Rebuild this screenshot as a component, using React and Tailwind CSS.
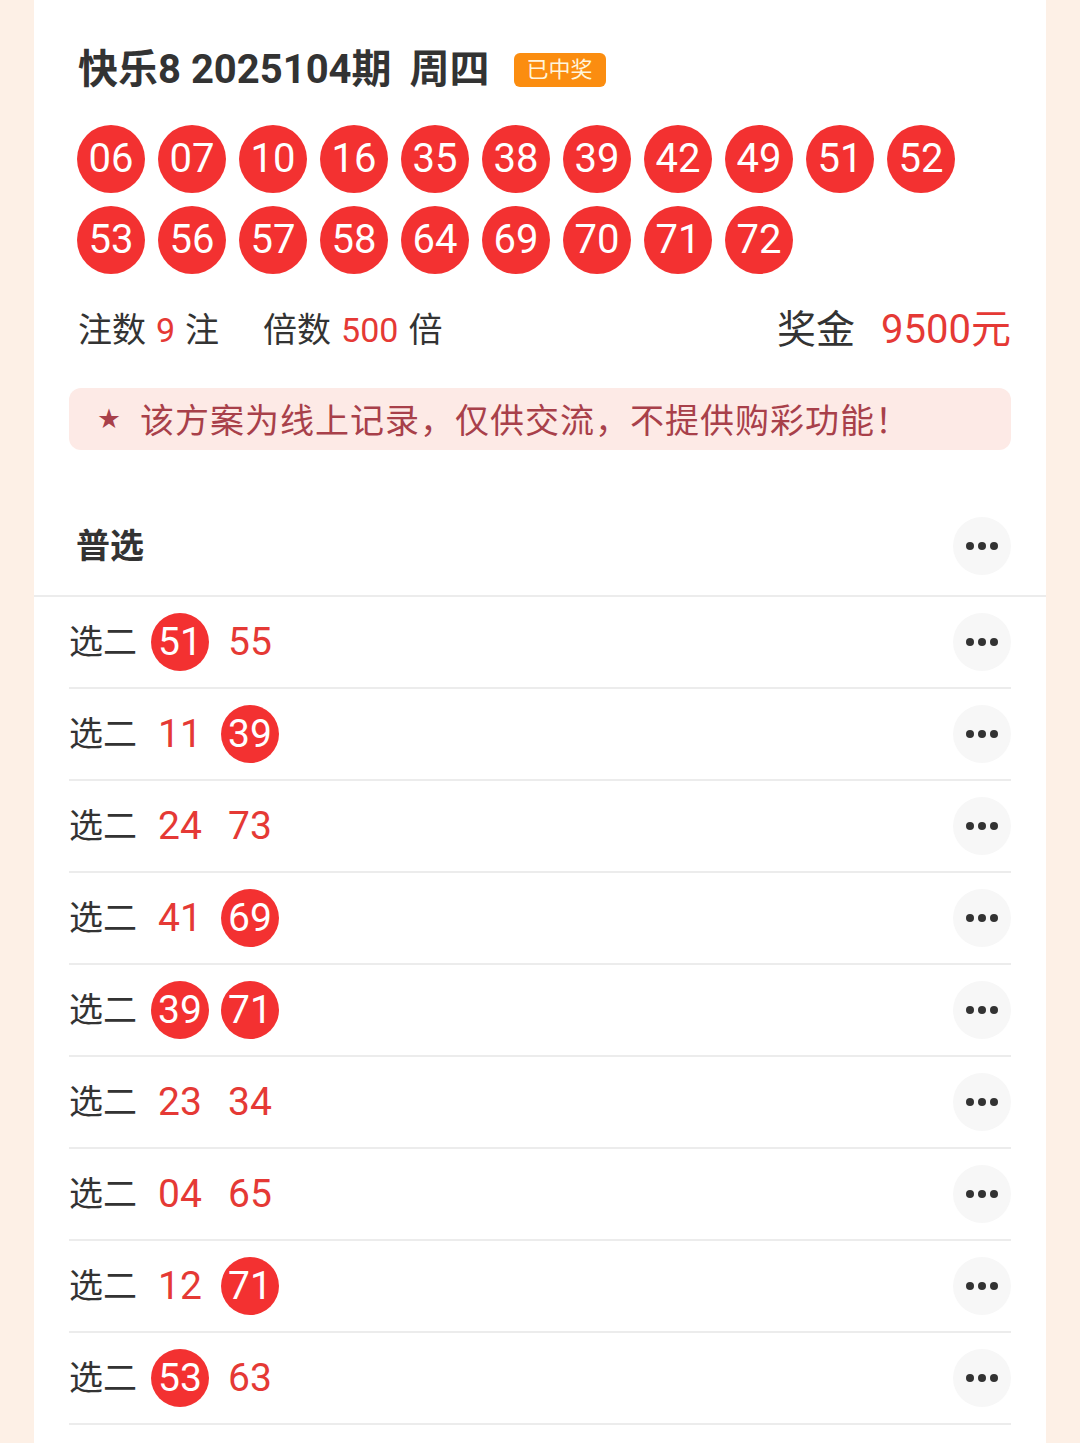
const DRAW = ['06','07','10','16','35','38','39','42','49','51','52','53','56','57','58','64','69','70','71','72']

const PICKS = [
  [['51', true], ['55', false]],
  [['11', false], ['39', true]],
  [['24', false], ['73', false]],
  [['41', false], ['69', true]],
  [['39', true], ['71', true]],
  [['23', false], ['34', false]],
  [['04', false], ['65', false]],
  [['12', false], ['71', true]],
  [['53', true], ['63', false]],
]

const FONT = { fontFamily: 'Roboto, "Noto Sans CJK SC", sans-serif' }

export default function App() {
  return (
    <div style={FONT} className="w-[1080px] h-[1443px] bg-[#fdf0e6] px-[34px] overflow-hidden">
      <div className="bg-white h-full">
        {/* Header */}
        <div className="px-[35px] pt-[48px]">
          <div className="h-[44px] pl-[9px] flex items-center">
            <span className="text-[40px] font-bold text-[#333] leading-none">快乐8 2025104期</span>
            <span className="text-[40px] font-bold text-[#333] leading-none ml-[18px]">周四</span>
            <span className="ml-[24px] h-[34px] px-[13px] rounded-[6px] bg-[#fb8d10] text-[#fff5dc] text-[22px] leading-[34px]">已中奖</span>
          </div>

          <div className="mt-[33px] pl-[8px] grid grid-cols-[repeat(11,68px)] gap-[13px]">
            {DRAW.map(n => (
              <div key={n} className="w-[68px] h-[68px] rounded-full bg-[#f33131] text-white text-[40px] flex items-center justify-center leading-none">{n}</div>
            ))}
          </div>

          <div className="mt-[36px] h-[40px] pl-[9px] flex items-center text-[#333] text-[34px] leading-none">
            <span>注数</span>
            <span className="text-[#e53935] ml-[10px]">9</span>
            <span className="ml-[10px]">注</span>
            <span className="ml-[44px]">倍数</span>
            <span className="text-[#e53935] ml-[10px]">500</span>
            <span className="ml-[10px]">倍</span>
            <span className="ml-auto text-[39px]">奖金</span>
            <span className="ml-[26px] text-[40px] text-[#e53935]">9500元</span>
          </div>

          <div className="mt-[38px] h-[62px] rounded-[12px] bg-[#fdeae6] flex items-center pl-[29px] text-[#a8404a]">
            <span className="text-[22px] leading-none">★</span>
            <span style={{ fontFamily: '"Noto Sans CJK SC", sans-serif' }} className="ml-[20px] text-[34px] tracking-[1px] leading-none">该方案为线上记录，仅供交流，不提供购彩功能！</span>
          </div>

          <div className="mt-[47px] h-[98px] flex items-center">
            <span className="pl-[7px] text-[34px] font-bold text-[#333]">普选</span>
            <MoreButton />
          </div>
        </div>

        <div className="h-[2px] bg-[#ececec]" />

        {/* Picks */}
        <div className="px-[35px]">
          {PICKS.map((row, i) => (
            <div key={i}>
              <div className="h-[90px] flex items-center">
                <span className="text-[34px] text-[#333] leading-none">选二</span>
                <div className="ml-[14px] flex gap-[12px]">
                  {row.map(([n, hit], j) => hit ? (
                    <div key={j} className="w-[58px] h-[58px] rounded-full bg-[#f33131] text-white text-[39px] leading-none flex items-center justify-center">{n}</div>
                  ) : (
                    <div key={j} className="w-[58px] h-[58px] text-[#e53935] text-[39px] leading-none flex items-center justify-center">{n}</div>
                  ))}
                </div>
                <MoreButton />
              </div>
              <div className="h-[2px] bg-[#ececec]" />
            </div>
          ))}
        </div>
      </div>
    </div>
  )
}

function MoreButton() {
  return (
    <button className="ml-auto w-[58px] h-[58px] rounded-full bg-[#f7f7f7] flex items-center justify-center gap-[4px]">
      <span className="w-[8px] h-[8px] rounded-full bg-[#333]" />
      <span className="w-[8px] h-[8px] rounded-full bg-[#333]" />
      <span className="w-[8px] h-[8px] rounded-full bg-[#333]" />
    </button>
  )
}
